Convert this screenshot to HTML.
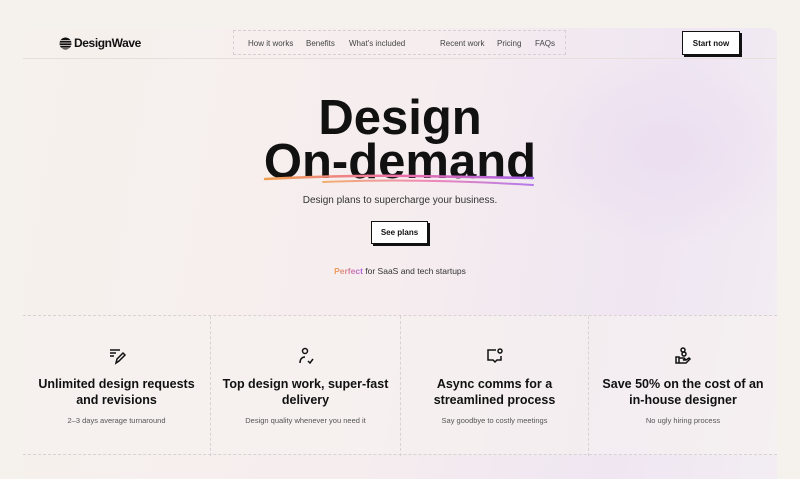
<!DOCTYPE html>
<html><head><style>
*{margin:0;padding:0;box-sizing:border-box}
html,body{width:800px;height:479px;overflow:hidden}
body{background:#f5f2ee;font-family:"Liberation Sans",sans-serif;color:#111;position:relative}
.card{position:absolute;left:23px;top:28px;width:754px;height:451px;border-radius:8px 8px 0 0;background:linear-gradient(100deg,#f6f1ed 0%,#f6eeee 45%,#efe6f2 80%,#f3edf3 100%);overflow:hidden}
.glow{position:absolute;right:-40px;top:20px;width:300px;height:200px;background:radial-gradient(ellipse,#ebdff0 0%,rgba(235,223,240,0) 70%)}
.hdr{position:absolute;left:0;top:0;width:754px;height:31px;border-bottom:1px solid #e6dfdc}
.logo{position:absolute;left:36px;top:8px;font-weight:bold;font-size:12px;letter-spacing:-.4px;display:flex;align-items:center;gap:2px}
.nav{position:absolute;left:210px;top:2px;width:333px;height:25px;border:1px dashed #d7d0d2;font-size:8px;color:#444}
.nav span{position:absolute;top:8px}
.btn{position:absolute;background:#fff;border:1px solid #111;box-shadow:2px 2px 0 #111;font-weight:bold;font-size:8px;text-align:center}
h1{position:absolute;left:0;width:754px;text-align:center;font-size:49px;font-weight:bold;letter-spacing:0;line-height:46px}
.c{position:absolute;text-align:center}
.feat{position:absolute;left:0;top:287px;width:754px;height:140px;border-top:1px dashed #d8d2d2;border-bottom:1px dashed #d8d2d2;background:rgba(246,242,240,.6)}
.col{position:absolute;top:0;height:140px;text-align:center}
.col+.col{border-left:1px dashed #d8d2d2}
.col h3{position:absolute;left:0;width:100%;top:60px;font-size:12.5px;line-height:16px;font-weight:bold}
.col p{position:absolute;left:0;width:100%;top:100px;font-size:7.5px;color:#555}
.col svg{position:absolute;left:50%;top:30px;margin-left:-10px}
</style></head><body>
<div class="card">
<div class="glow"></div>
<div class="hdr">
<div class="logo"><svg width="13" height="13" viewBox="0 0 13 13"><circle cx="6.5" cy="6.5" r="6" fill="#111"/><g stroke="#f4efec" stroke-width=".8"><line x1="0" y1="3.5" x2="13" y2="3.5"/><line x1="0" y1="6" x2="13" y2="6"/><line x1="0" y1="8.5" x2="13" y2="8.5"/><line x1="0" y1="11" x2="13" y2="11"/></g></svg>DesignWave</div>
<div class="nav"><span style="left:14px">How it works</span><span style="left:72px">Benefits</span><span style="left:115px">What's included</span><span style="left:206px">Recent work</span><span style="left:263px">Pricing</span><span style="left:301px">FAQs</span></div>
<div class="btn" style="left:659px;top:3px;width:58px;height:24px;line-height:24px">Start now</div>
</div>
<h1 style="top:67px">Design</h1>
<h1 style="top:111px">On-demand</h1>
<svg style="position:absolute;left:240px;top:144px" width="272" height="18"><defs><linearGradient id="g" x1="0" x2="1"><stop offset="0" stop-color="#f0a050"/><stop offset=".5" stop-color="#ee6fa8"/><stop offset="1" stop-color="#a35ee8"/></linearGradient></defs><path d="M2 7 Q80 3 150 4 T270 6" stroke="url(#g)" stroke-width="2.5" fill="none" stroke-linecap="round"/><path d="M60 10 Q150 6 270 13" stroke="url(#g)" stroke-width="2" fill="none" stroke-linecap="round" opacity=".8"/></svg>
<div class="c" style="left:0;width:754px;top:167px;font-size:10px;color:#333">Design plans to supercharge your business.</div>
<div class="btn" style="left:348px;top:193px;width:57px;height:23px;line-height:21px">See plans</div>
<div class="c" style="left:0;width:754px;top:238px;font-size:8.5px;color:#333"><b style="background:linear-gradient(90deg,#f0a050,#b35ee0);-webkit-background-clip:text;color:transparent">Perfect</b> for SaaS and tech startups</div>
<div class="feat">
<div class="col" style="left:0;width:187px"><svg width="20" height="20" viewBox="0 0 20 20" fill="none" stroke="#111" stroke-width="1.5"><path d="M3 4h10M3 7h6M3 10h4M9 17l1-4 6-6 2 2-6 6z"/></svg><h3>Unlimited design requests<br>and revisions</h3><p>2–3 days average turnaround</p></div>
<div class="col" style="left:187px;width:190px"><svg width="20" height="20" viewBox="0 0 20 20" fill="none" stroke="#111" stroke-width="1.5"><circle cx="9" cy="5" r="2.5"/><path d="M4 17c0-4 2-6 5-6M12 15l2 2 3-4"/></svg><h3>Top design work, super-fast<br>delivery</h3><p>Design quality whenever you need it</p></div>
<div class="col" style="left:377px;width:188px"><svg width="20" height="20" viewBox="0 0 20 20" fill="none" stroke="#111" stroke-width="1.5"><path d="M11 4H3v10h5l2 2 2-2h4V10"/><circle cx="15" cy="5" r="2"/></svg><h3>Async comms for a<br>streamlined process</h3><p>Say goodbye to costly meetings</p></div>
<div class="col" style="left:565px;width:189px"><svg width="20" height="20" viewBox="0 0 20 20" fill="none" stroke="#111" stroke-width="1.5"><circle cx="10" cy="4" r="2"/><circle cx="11" cy="8" r="2"/><path d="M3 11h3v6H3zM6 12h5l1 1-2 1h3l3-2 1 1-4 4H6"/></svg><h3>Save 50% on the cost of an<br>in-house designer</h3><p>No ugly hiring process</p></div>
</div>
</div>
</body></html>
